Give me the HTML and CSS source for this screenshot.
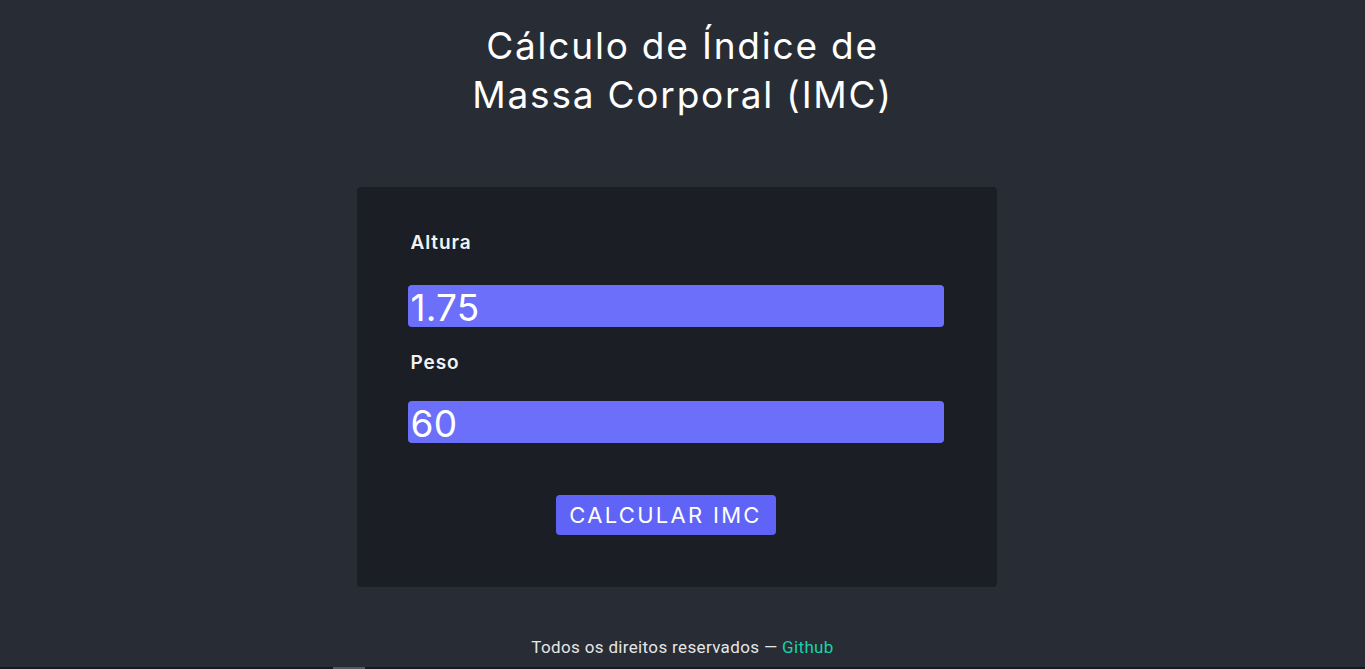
FILE: index.html
```html
<!DOCTYPE html>
<html lang="pt-BR">
<head>
<meta charset="utf-8">
<title>Cálculo de IMC</title>
<link rel="stylesheet" href="styles.css">
</head>
<body>
  <main class="page">
    <h1 class="title">Cálculo de Índice de<br>Massa Corporal (IMC)</h1>
    <form class="card">
      <label class="label" for="altura">Altura</label>
      <input class="field" id="altura" type="text" value="1.75">
      <label class="label label-second" for="peso">Peso</label>
      <input class="field field-second" id="peso" type="text" value="60">
      <button class="btn" type="button">CALCULAR IMC</button>
    </form>
    <footer class="footer">Todos os direitos reservados — <a class="footer-link" href="#">Github</a></footer>
  </main>
  <div class="bottom-strip"><span class="strip-thumb"></span></div>
</body>
</html>
```

FILE: styles.css
```css
html, body {
  margin: 0;
  padding: 0;
}
body {
  background: #282c34;
  color: #ffffff;
  font-family: "Inter", "DejaVu Sans", sans-serif;
  height: 669px;
  overflow: hidden;
  display: flex;
  flex-direction: column;
}
.page {
  flex: 1;
  display: flex;
  flex-direction: column;
  align-items: center;
}
.title {
  margin: 21px 0 0;
  font-size: 37px;
  line-height: 49px;
  font-weight: 400;
  text-align: center;
  letter-spacing: 1.8px;
  color: #ffffff;
}
.card {
  margin-top: 68px;
  margin-right: 12px;
  width: 640px;
  height: 400px;
  box-sizing: border-box;
  padding: 46px 53px 0 51px;
  background: #1b1e25;
  border-radius: 4px;
  display: flex;
  flex-direction: column;
}
.label {
  font-size: 19px;
  line-height: 20px;
  font-weight: 600;
  letter-spacing: 0.9px;
  color: #f2f2f2;
  margin-left: 3px;
}
.label-second {
  margin-top: 26px;
}
.field {
  margin-top: 32px;
  width: 536px;
  height: 42px;
  box-sizing: border-box;
  border: none;
  border-radius: 4px;
  background: #6c6ff9;
  color: #ffffff;
  font-family: inherit;
  font-size: 37px;
  font-weight: 400;
  letter-spacing: 0.2px;
  padding: 2px 0 0 3px;
  outline: none;
}
.field-second {
  margin-top: 28px;
}
.btn {
  align-self: center;
  margin-top: 52px;
  margin-right: 20px;
  width: 220px;
  height: 40px;
  border: none;
  border-radius: 4px;
  background: #5f63f6;
  color: #ffffff;
  font-family: inherit;
  font-size: 22px;
  font-weight: 400;
  letter-spacing: 2.3px;
  padding: 0;
}
.footer {
  margin-top: 50px;
  font-family: "Roboto", sans-serif;
  font-size: 17px;
  font-weight: 400;
  letter-spacing: 0.35px;
  color: #e6e6e6;
}
.footer-link {
  color: #1ad1ab;
  text-decoration: none;
}
.bottom-strip {
  position: absolute;
  left: 0;
  right: 0;
  top: 667px;
  height: 2px;
  background: #17191c;
}
.strip-thumb {
  position: absolute;
  left: 333px;
  top: 0;
  width: 32px;
  height: 2px;
  background: #55575b;
}
```
